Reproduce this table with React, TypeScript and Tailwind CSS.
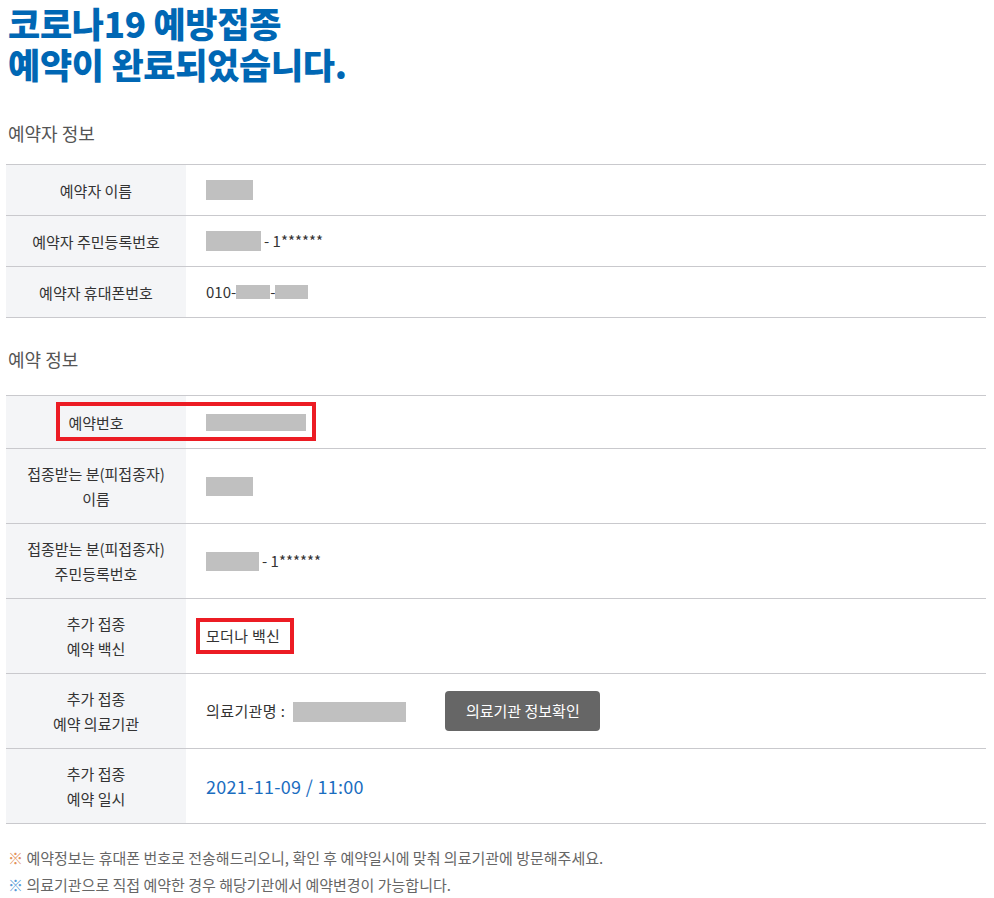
const font = { fontFamily: '"Noto Sans CJK KR", "Noto Sans", sans-serif' };

function Blank({ w, h }: { w: number; h: number }) {
  return <span className="inline-block bg-[#c0c0c0] align-middle" style={{ width: w, height: h }} />;
}

function Row({
  label,
  h,
  children,
  overlay,
}: {
  label: React.ReactNode;
  h: string;
  children: React.ReactNode;
  overlay?: React.ReactNode;
}) {
  return (
    <div className={`relative flex border-b border-[#c9c9cd] ${h}`}>
      <div className="flex w-[180px] shrink-0 items-center justify-center bg-[#f4f5f7] text-center text-[15px] leading-[25px] text-[#333]">
        {label}
      </div>
      <div className="flex flex-1 items-center pl-[20px] text-[15px] text-[#333]">{children}</div>
      {overlay}
    </div>
  );
}

export default function App() {
  return (
    <div className="bg-white pl-[6px] pr-[8px] pb-[10px]" style={font}>
      {/* Title */}
      <h1 className="pl-[2px] pt-[2px] text-[35px] font-black leading-[41px] tracking-[-0.3px] text-[#0067b4]">
        <span className="block">코로나19 예방접종</span>
        <span className="block">예약이 완료되었습니다.</span>
      </h1>

      {/* 예약자 정보 */}
      <h2 className="mt-[36px] pl-[2px] text-[18px] leading-[26px] text-[#555]">예약자 정보</h2>
      <div className="mt-[18px] border-t border-[#c9c9cd]">
        <Row label="예약자 이름" h="h-[51px]">
          <Blank w={47} h={20} />
        </Row>
        <Row label="예약자 주민등록번호" h="h-[51px]">
          <Blank w={55} h={20} />
          <span className="ml-[3px]">- 1******</span>
        </Row>
        <Row label="예약자 휴대폰번호" h="h-[51px]">
          <span>010-</span>
          <Blank w={34} h={14} />
          <span>-</span>
          <Blank w={33} h={14} />
        </Row>
      </div>

      {/* 예약 정보 */}
      <h2 className="mt-[28px] pl-[2px] text-[18px] leading-[26px] text-[#555]">예약 정보</h2>
      <div className="mt-[23px] border-t border-[#c9c9cd]">
        <Row
          label="예약번호"
          h="h-[53px]"
          overlay={
            <div className="pointer-events-none absolute left-[50px] top-[6px] h-[39px] w-[260px] border-[4px] border-[#ec1c24]" />
          }
        >
          <Blank w={100} h={17} />
        </Row>
        <Row
          label={
            <span>
              접종받는 분(피접종자)
              <br />
              이름
            </span>
          }
          h="h-[75px]"
        >
          <Blank w={47} h={19} />
        </Row>
        <Row
          label={
            <span>
              접종받는 분(피접종자)
              <br />
              주민등록번호
            </span>
          }
          h="h-[75px]"
        >
          <Blank w={53} h={19} />
          <span className="ml-[3px]">- 1******</span>
        </Row>
        <Row
          label={
            <span>
              추가 접종
              <br />
              예약 백신
            </span>
          }
          h="h-[75px]"
        >
          <span className="-ml-[10px] border-[4px] border-[#ec1c24] py-[2px] pl-[6px] pr-[10px] leading-[24px] tracking-[0.3px]">
            모더나 백신
          </span>
        </Row>
        <Row
          label={
            <span>
              추가 접종
              <br />
              예약 의료기관
            </span>
          }
          h="h-[75px]"
        >
          <span className="tracking-[0.4px]">의료기관명 :</span>
          <span className="ml-[8px]">
            <Blank w={113} h={20} />
          </span>
          <button className="ml-[39px] h-[40px] w-[155px] rounded-[4px] bg-[#666] text-[15px] text-white">
            의료기관 정보확인
          </button>
        </Row>
        <Row
          label={
            <span>
              추가 접종
              <br />
              예약 일시
            </span>
          }
          h="h-[75px]"
        >
          <span className="text-[18px] tracking-[0.3px] text-[#1a6dbf]">2021-11-09 / 11:00</span>
        </Row>
      </div>

      {/* Notes */}
      <div className="mt-[20px] pl-[2px] text-[15px] leading-[27px] text-[#666]">
        <p>
          <span className="text-[#e2905a]">※</span> 예약정보는 휴대폰 번호로 전송해드리오니, 확인 후 예약일시에 맞춰 의료기관에 방문해주세요.
        </p>
        <p>
          <span className="text-[#5a9ad8]">※</span> 의료기관으로 직접 예약한 경우 해당기관에서 예약변경이 가능합니다.
        </p>
      </div>
    </div>
  );
}
